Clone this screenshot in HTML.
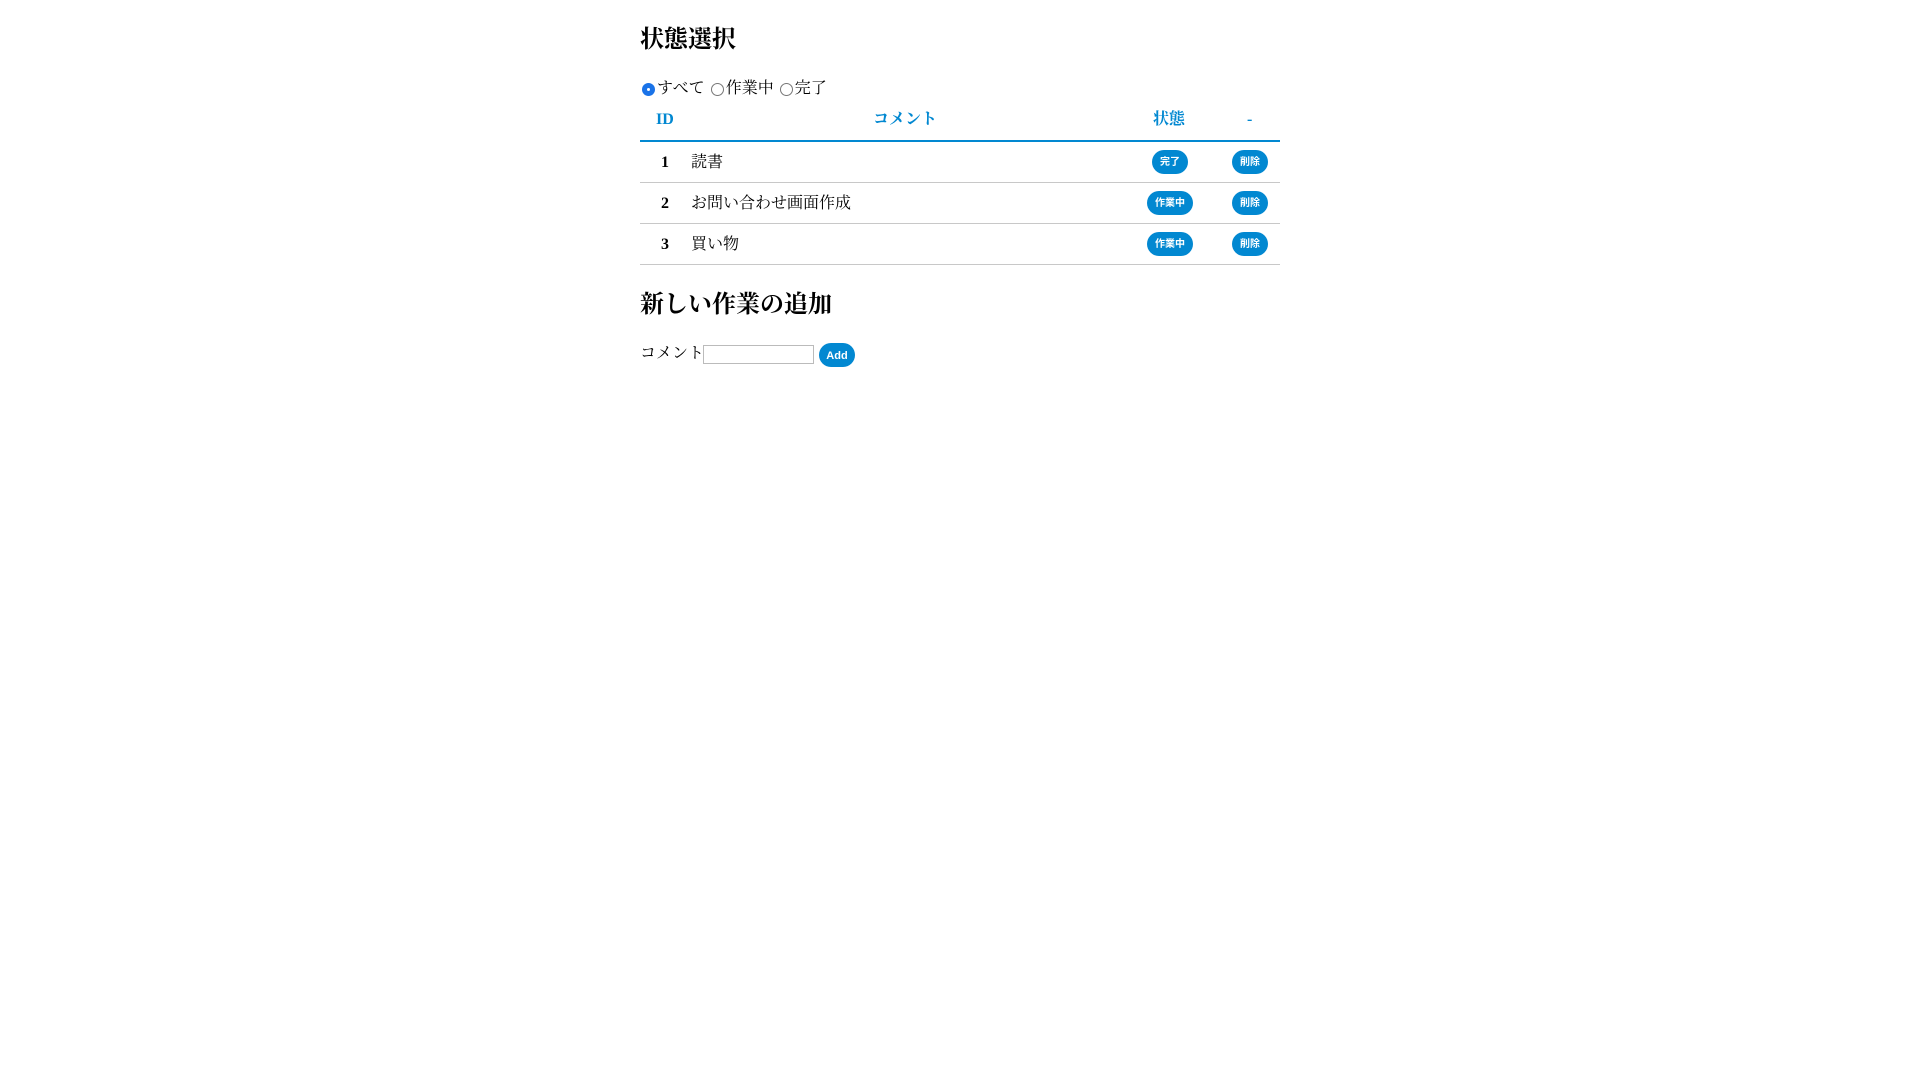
<!DOCTYPE html>
<html><head><meta charset="utf-8"><style>
body{margin:0;background:#fff;font-family:"Liberation Serif","Noto Serif CJK JP",serif;color:#000;}
.wrap{position:absolute;left:640px;top:0;width:640px;height:1080px}
.a{position:absolute;white-space:nowrap}
h2{margin:0;font-size:24px;font-weight:bold;line-height:28px}
.th{color:#0288d1;font-weight:bold;font-size:16px;line-height:20px}
.btn{position:absolute;background:#0288d1;color:#fff;border-radius:12px;height:24px;line-height:26px;text-align:center;font-family:"Liberation Sans","Noto Sans CJK JP",sans-serif;font-weight:bold;font-size:10px}
.line{position:absolute;left:0;width:640px;height:1px;background:#c8c8c8}
.radio{display:inline-block;width:13px;height:13px;border:1px solid #777;border-radius:50%;vertical-align:-3px;margin:0 2px 0 2px;box-sizing:border-box}
.radio.on{background:#1a73e8;border-color:#1a73e8;position:relative}
.radio.on:after{content:"";position:absolute;left:4px;top:4px;width:3px;height:3px;border-radius:50%;background:#fff}
.t{font-size:16px;line-height:20px}
</style></head><body><div class="wrap">
<h2 class="a" style="left:0;top:26px">状態選択</h2>
<div class="a t" style="left:0;top:79px"><span class="radio on"></span>すべて <span class="radio"></span>作業中 <span class="radio"></span>完了</div>
<div class="a th" style="left:16px;top:110px">ID</div>
<div class="a th" style="left:233px;top:110px">コメント</div>
<div class="a th" style="left:513px;top:110px">状態</div>
<div class="a th" style="left:607px;top:110px">-</div>
<div class="a" style="left:0;top:140px;width:640px;height:2px;background:#0288d1"></div>
<div class="a t" style="left:21px;top:153px;font-weight:bold">1</div>
<div class="a t" style="left:51px;top:153px">読書</div>
<div class="btn" style="left:512px;top:150px;width:36px">完了</div>
<div class="btn" style="left:592px;top:150px;width:36px">削除</div>
<div class="line" style="top:182px"></div>
<div class="a t" style="left:21px;top:194px;font-weight:bold">2</div>
<div class="a t" style="left:51px;top:194px">お問い合わせ画面作成</div>
<div class="btn" style="left:507px;top:191px;width:46px">作業中</div>
<div class="btn" style="left:592px;top:191px;width:36px">削除</div>
<div class="line" style="top:223px"></div>
<div class="a t" style="left:21px;top:235px;font-weight:bold">3</div>
<div class="a t" style="left:51px;top:235px">買い物</div>
<div class="btn" style="left:507px;top:232px;width:46px">作業中</div>
<div class="btn" style="left:592px;top:232px;width:36px">削除</div>
<div class="line" style="top:264px"></div>
<h2 class="a" style="left:0;top:291px">新しい作業の追加</h2>
<div class="a t" style="left:0;top:344px">コメント</div>
<div class="a" style="left:63px;top:345px;width:111px;height:19px;border:1px solid #bbb;box-sizing:border-box"></div>
<div class="btn" style="left:179px;top:343px;width:36px;font-size:11px">Add</div>
</div></body></html>
